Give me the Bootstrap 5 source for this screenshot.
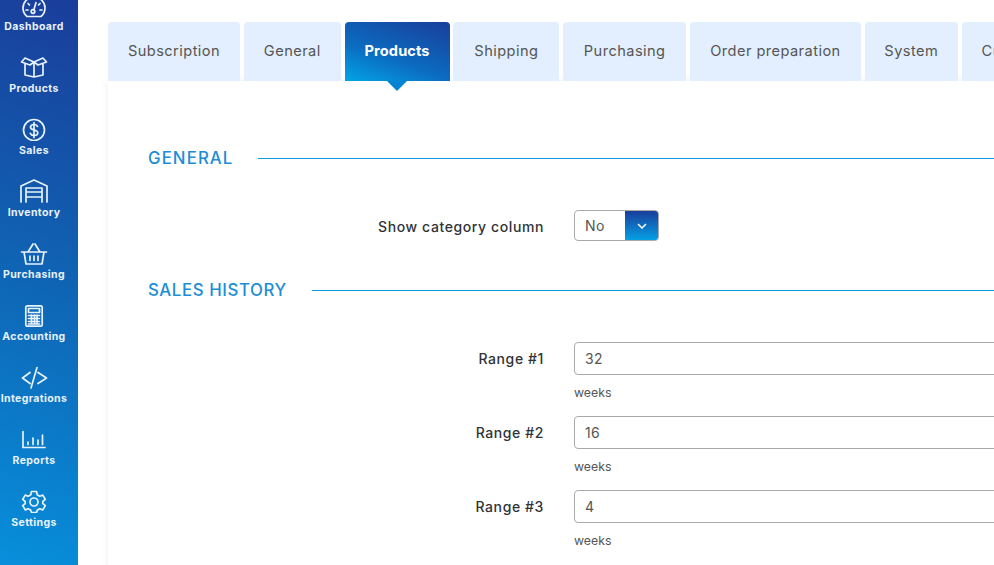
<!DOCTYPE html>
<html lang="en">
<head>
<meta charset="utf-8">
<title>Settings</title>
<link rel="stylesheet" href="https://cdn.jsdelivr.net/npm/bootstrap@5.3.0/dist/css/bootstrap.min.css">
<style>
html,body{height:100%;overflow:hidden}
body{font-family:Inter,"Liberation Sans",sans-serif;color:#333;background:#fff}
.shell{height:565px;width:994px;overflow:hidden}
.side{width:78px;flex:none;height:565px;background:linear-gradient(200deg,#1a3d9b 0%,#0f65b5 50%,#078fdb 100%);overflow:hidden}
.side-list{margin-top:1px;width:68px}
.side-item{height:62px;color:#e8f2fb;font-size:10.5px;font-weight:700;letter-spacing:.4px;line-height:14px;white-space:nowrap}
.side-item svg{width:28px;height:24px;fill:none;stroke:#e8f2fb;stroke-width:1.7;stroke-linecap:round;stroke-linejoin:round;margin-bottom:3px;flex:none}
.side-item.first{height:33px}
.side-item.first svg{height:18px;margin-bottom:2px}
.content{width:916px;flex:none;padding:22px 0 0 30px}
.tabrow{gap:3.8px;width:960px}
.tabitem{height:59px;background:#e3effe;border-radius:4px 4px 0 0;font-size:14.6px;letter-spacing:.45px;color:#555;flex:none;position:relative;white-space:nowrap}
.tab-a{width:132px}.tab-b{width:97px}.tab-c{width:105px}.tab-d{width:106px}.tab-e{width:123px}.tab-f{width:171px}.tab-g{width:93px}
.tab-h{width:120px;padding-left:20px}
.tabitem.on{background:linear-gradient(200deg,#1a3d9b 0%,#0b6cc0 60%,#03a4e6 100%);color:#fff;font-weight:700;letter-spacing:.1px}
.tabitem.on::after{content:"";position:absolute;left:50%;bottom:-10px;margin-left:-10px;border-left:10px solid transparent;border-right:10px solid transparent;border-top:10px solid #0584d4}
.panel{width:960px;padding:63px 0 0 40px;box-shadow:0 0 8px rgba(0,0,0,.07);height:500px}
.sect{color:#1c8dd6;font-size:16.8px;font-weight:500;line-height:28px;white-space:nowrap;height:28px;letter-spacing:.6px}
.sect.wide{letter-spacing:1.1px}
.sect::after{content:"";flex:1;height:1px;background:#0d9bdc;margin-left:25px}
.fieldlabel{width:396px;flex:none;text-align:right;font-size:14px;font-weight:500;letter-spacing:.6px;color:#2f3338;margin-right:30px}
.row-sel .fieldlabel{padding-top:2px}
.selbox{width:85px;height:31px;border:1px solid #aaa;border-radius:4px;overflow:hidden;font-size:14px;letter-spacing:.5px;color:#555}
.selbox span:first-child{padding-left:10px}
.selarrow{width:33px;flex:none;background:linear-gradient(180deg,#1a3d9b,#05a0e4)}
.selarrow svg{width:10px;height:6px;fill:none;stroke:#fff;stroke-width:1.5}
.numinput{width:500px;height:33px;border:1px solid #aaa;border-radius:4px;padding:0 10px;font-size:14px;letter-spacing:.3px;color:#555;line-height:31px}
.unit{font-size:12.3px;color:#555;margin-left:426px;line-height:16px;margin-top:10px;height:31px}
.row-sel{margin-top:38px;height:31px}
.sect.second{margin-top:35px}
.block-first{margin-top:38px}
</style>
</head>
<body>
<div class="shell d-flex">
  <nav class="side">
    <div class="side-list d-flex flex-column">
      <div class="side-item first d-flex flex-column align-items-center justify-content-end">
        <svg viewBox="0 0 28 18"><path d="M7 16.500H21C23.500 14.500 25 11.500 25 8C25 2 20 -3 14 -3S3 2 3 8C3 11.500 4.500 14.500 7 16.500Z"/><circle cx="13" cy="11.500" r="1.800"/><path d="M13.800 10L16 2.500M8 3.500L9.500 5M20 3.500L18.500 5M6 10H8M20 10H22"/></svg>
        <span>Dashboard</span>
      </div>
      <div class="side-item d-flex flex-column align-items-center justify-content-end pt-3">
        <svg viewBox="0 0 28 24"><path d="M5 9V20L14 22L23 20V9M14 22V7M14 7L5 3L1.500 7L10 10L14 7L18 10L26.500 7L23 3L14 7"/></svg>
        <span>Products</span>
      </div>
      <div class="side-item d-flex flex-column align-items-center justify-content-end pt-3">
        <svg viewBox="0 0 28 24"><circle cx="14" cy="13" r="10.500"/><path d="M17.500 9.500C17 8 15.500 7.500 14 7.500C12 7.500 10.500 8.500 10.500 10.200C10.500 14 17.800 12 17.800 15.800C17.800 17.500 16 18.500 14 18.500C12.300 18.500 11 17.800 10.300 16.300M14 5.500V20.500"/></svg>
        <span>Sales</span>
      </div>
      <div class="side-item d-flex flex-column align-items-center justify-content-end pt-3">
        <svg viewBox="0 0 28 24"><path d="M1 23V7L14 1L27 7V23M6 23V9H22V23M6 13H22M6 18H22"/></svg>
        <span>Inventory</span>
      </div>
      <div class="side-item d-flex flex-column align-items-center justify-content-end pt-3">
        <svg viewBox="0 0 28 24"><path d="M1.500 11H26.500M4 11L6 23H22L24 11M8 11L13 3M20 11L15 3M10 15V19.500M14 15V19.500M18 15V19.500"/></svg>
        <span>Purchasing</span>
      </div>
      <div class="side-item d-flex flex-column align-items-center justify-content-end pt-3">
        <svg viewBox="0 0 28 24"><rect x="5.800" y="2.800" width="16.400" height="20.400" rx="1.500"/><path d="M8.500 5.500H19.500V9.500H8.500ZM8.500 12.500H19.500M8.500 15.500H19.500M8.500 18.500H19.500M8.500 21H19.500M11.500 12V21M14.500 12V21M17 12V21"/></svg>
        <span>Accounting</span>
      </div>
      <div class="side-item d-flex flex-column align-items-center justify-content-end pt-3">
        <svg viewBox="0 0 28 24"><path d="M10 7.500L2.500 13L10 18.500M18 7.500L26.500 13L18 18.500M17 2.500L11 23"/></svg>
        <span>Integrations</span>
      </div>
      <div class="side-item d-flex flex-column align-items-center justify-content-end pt-3">
        <svg viewBox="0 0 28 24"><path d="M3 4.500V20.500H25M8 17.500V15M13 17.500V11M18 17.500V13M22.500 17.500V8"/></svg>
        <span>Reports</span>
      </div>
      <div class="side-item d-flex flex-column align-items-center justify-content-end pt-3">
        <svg viewBox="0 0 28 24"><circle cx="14" cy="13" r="4"/><path d="M11.500 2.500H16.500L17.200 5.800L19.700 7.200L22.800 6.100L25.300 10.400L22.800 12.500V14.500L25.300 16.600L22.800 20.900L19.700 19.800L17.200 21.200L16.500 23.500H11.500L10.800 21.200L8.300 19.800L5.200 20.900L2.700 16.600L5.200 14.500V12.500L2.700 10.400L5.200 6.100L8.300 7.200L10.800 5.800Z"/></svg>
        <span>Settings</span>
      </div>
    </div>
  </nav>
  <main class="content">
    <div class="tabrow d-flex">
      <div class="tabitem tab-a d-flex align-items-center justify-content-center">Subscription</div>
      <div class="tabitem tab-b d-flex align-items-center justify-content-center">General</div>
      <div class="tabitem tab-c on d-flex align-items-center justify-content-center">Products</div>
      <div class="tabitem tab-d d-flex align-items-center justify-content-center">Shipping</div>
      <div class="tabitem tab-e d-flex align-items-center justify-content-center">Purchasing</div>
      <div class="tabitem tab-f d-flex align-items-center justify-content-center">Order preparation</div>
      <div class="tabitem tab-g d-flex align-items-center justify-content-center">System</div>
      <div class="tabitem tab-h d-flex align-items-center">Custom</div>
    </div>
    <div class="panel">
      <div class="sect wide d-flex align-items-center">GENERAL</div>
      <div class="row-sel d-flex align-items-center">
        <div class="fieldlabel">Show category column</div>
        <div class="selbox d-flex align-items-stretch">
          <span class="flex-grow-1 d-flex align-items-center">No</span>
          <span class="selarrow d-flex align-items-center justify-content-center"><svg viewBox="0 0 10 6"><path d="M1 1L5 5L9 1"/></svg></span>
        </div>
      </div>
      <div class="sect second d-flex align-items-center">SALES HISTORY</div>
      <div class="block-first">
        <div class="d-flex align-items-center"><div class="fieldlabel">Range #1</div><div class="numinput">32</div></div>
        <div class="unit">weeks</div>
        <div class="d-flex align-items-center"><div class="fieldlabel">Range #2</div><div class="numinput">16</div></div>
        <div class="unit">weeks</div>
        <div class="d-flex align-items-center"><div class="fieldlabel">Range #3</div><div class="numinput">4</div></div>
        <div class="unit">weeks</div>
      </div>
    </div>
  </main>
</div>
<script src="https://cdn.jsdelivr.net/npm/bootstrap@5.3.0/dist/js/bootstrap.bundle.min.js"></script>
</body>
</html>
